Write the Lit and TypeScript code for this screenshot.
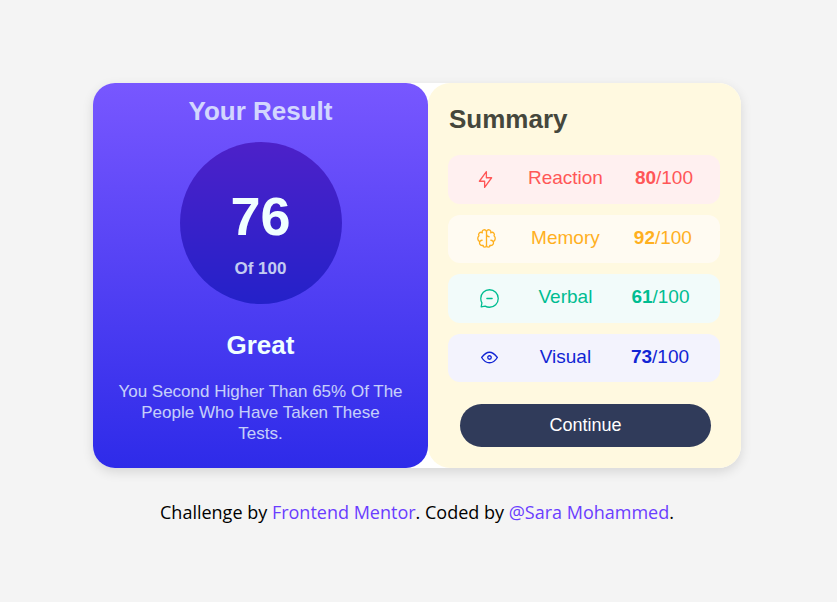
import { LitElement, html, css, svg } from "lit";
import { customElement } from "lit/decorators.js";

const icons = {
  reaction: svg`<path d="M10.833 8.333V2.5l-6.666 9.167h5V17.5l6.666-9.167h-5Z"/>`,
  memory: svg`<path d="M5.833 11.667a2.5 2.5 0 1 0 .834 4.858"/><path d="M3.553 13.004a3.333 3.333 0 0 1-.728-5.53m.025-.067a2.083 2.083 0 0 1 2.983-2.824m.199.054A2.083 2.083 0 1 1 10 3.75v12.917a1.667 1.667 0 0 1-3.333 0M10 5.833a2.5 2.5 0 0 0 2.5 2.5m1.667 3.334a2.5 2.5 0 1 1-.834 4.858"/><path d="M16.447 13.004a3.334 3.334 0 0 0 .728-5.53m-.025-.067a2.083 2.083 0 0 0-2.983-2.824M10 3.75a2.085 2.085 0 0 1 2.538-2.033 2.084 2.084 0 0 1 1.43 2.92m-.635 12.03a1.667 1.667 0 0 1-3.333 0"/>`,
  verbal: svg`<path d="M7.5 10h5M10 18.333A8.333 8.333 0 1 0 1.667 10c0 1.518.406 2.942 1.115 4.167l-.699 3.75 3.75-.699A8.295 8.295 0 0 0 10 18.333Z"/>`,
  visual: svg`<path d="M10 11.667a1.667 1.667 0 1 0 0-3.334 1.667 1.667 0 0 0 0 3.334Z"/><path d="M17.5 10c-1.574 2.492-4.402 5-7.5 5s-5.926-2.508-7.5-5C4.416 7.632 6.66 5 10 5s5.584 2.632 7.5 5Z"/>`,
};

const scores = [
  { key: "reaction", label: "Reaction", value: 80 },
  { key: "memory", label: "Memory", value: 92 },
  { key: "verbal", label: "Verbal", value: 61 },
  { key: "visual", label: "Visual", value: 73 },
] as const;

@customElement("app-root")
export class AppRoot extends LitElement {
  static styles = css`
    :host {
      display: block;
      box-sizing: border-box;
      min-height: 100vh;
      padding: 83px 19px 32px 16px;
      background: #f4f4f4;
      font-family: "Liberation Sans", Arial, sans-serif;
    }
    h1, h2, p, ul {
      margin: 0;
      padding: 0;
    }
    .card {
      display: grid;
      grid-template-columns: 335fr 313fr;
      max-width: 648px;
      margin: 0 auto;
      border-radius: 22px;
      background: #fff;
      box-shadow: 0 4px 12px rgba(0, 0, 0, 0.12);
    }
    .result {
      display: flex;
      flex-direction: column;
      align-items: center;
      padding: 13px 20px 24px;
      border-radius: 22px;
      background: linear-gradient(#7857ff, #2e2be9);
      color: #f0ffff;
      text-align: center;
    }
    .title {
      font-size: 26px;
      line-height: 30px;
    }
    .soft {
      opacity: 0.77;
    }
    .circle {
      display: flex;
      flex-direction: column;
      align-items: center;
      gap: 13px;
      box-sizing: border-box;
      width: 162px;
      height: 162px;
      margin: 16px 0 26px;
      padding-top: 44px;
      border-radius: 50%;
      background: linear-gradient(#4d21c9, #2421c9);
      font-weight: bold;
    }
    .score {
      font-size: 54px;
      line-height: 60px;
    }
    .of {
      font-size: 17px;
      line-height: 20px;
    }
    .note {
      max-width: 286px;
      margin-top: 21px;
      font-size: 17px;
      line-height: 21px;
    }
    .summary {
      display: flex;
      flex-direction: column;
      padding: 21px 21px 21px 20px;
      border-radius: 22px;
      background: #fff9e0;
    }
    .summary .title {
      padding-left: 1px;
      color: #45473c;
    }
    .list {
      display: grid;
      grid-auto-rows: 1fr;
      gap: 11px;
      min-height: 227px;
      margin: 21px 0 22px;
      list-style: none;
    }
    .row {
      display: flex;
      align-items: center;
      justify-content: space-around;
      padding: 0 11px;
      border-radius: 12px;
      font-size: 19px;
      line-height: 22px;
    }
    .text {
      padding-bottom: 2px;
    }
    .icon {
      width: 21px;
      height: 21px;
      fill: none;
      stroke: currentColor;
      stroke-width: 1.25;
      stroke-linecap: round;
      stroke-linejoin: round;
    }
    .reaction { color: #ff5757; background: #fff0f0; }
    .memory { color: #ffb01f; background: #fffbf2; }
    .verbal { color: #00bd91; background: #f2fbfa; }
    .visual { color: #1125d4; background: #f3f3fd; }
    .continue {
      height: 43px;
      margin: 0 9px 0 12px;
      padding: 0 0 2px;
      border: 0;
      border-radius: 22px;
      background: #303b5a;
      color: #fff;
      font: 18px/22px "Liberation Sans", Arial, sans-serif;
      cursor: pointer;
    }
    .credit {
      margin-top: 33px;
      font: 18px/22px "Open Sans", sans-serif;
      text-align: center;
      color: #000;
    }
    .link {
      color: #6a3dff;
      text-decoration: none;
    }
  `;

  render() {
    return html`
      <main class="card">
        <section class="result">
          <h1 class="title soft">Your Result</h1>
          <div class="circle">
            <span class="score">76</span>
            <span class="of soft">Of 100</span>
          </div>
          <h2 class="title">Great</h2>
          <p class="note soft">You Second Higher Than 65% Of The People Who Have Taken These Tests.</p>
        </section>
        <section class="summary">
          <h2 class="title">Summary</h2>
          <ul class="list">
            ${scores.map(
              (s) => html`<li class="row ${s.key}">
                <svg class="icon" viewBox="0 0 20 20" aria-hidden="true">${icons[s.key]}</svg>
                <span class="text">${s.label}</span>
                <span class="text"><b>${s.value}</b>/100</span>
              </li>`
            )}
          </ul>
          <button class="continue" type="button">Continue</button>
        </section>
      </main>
      <footer class="credit">
        Challenge by <a class="link" href="#mentor">Frontend Mentor</a>. Coded by
        <a class="link" href="#coder">@Sara Mohammed</a>.
      </footer>
    `;
  }
}
